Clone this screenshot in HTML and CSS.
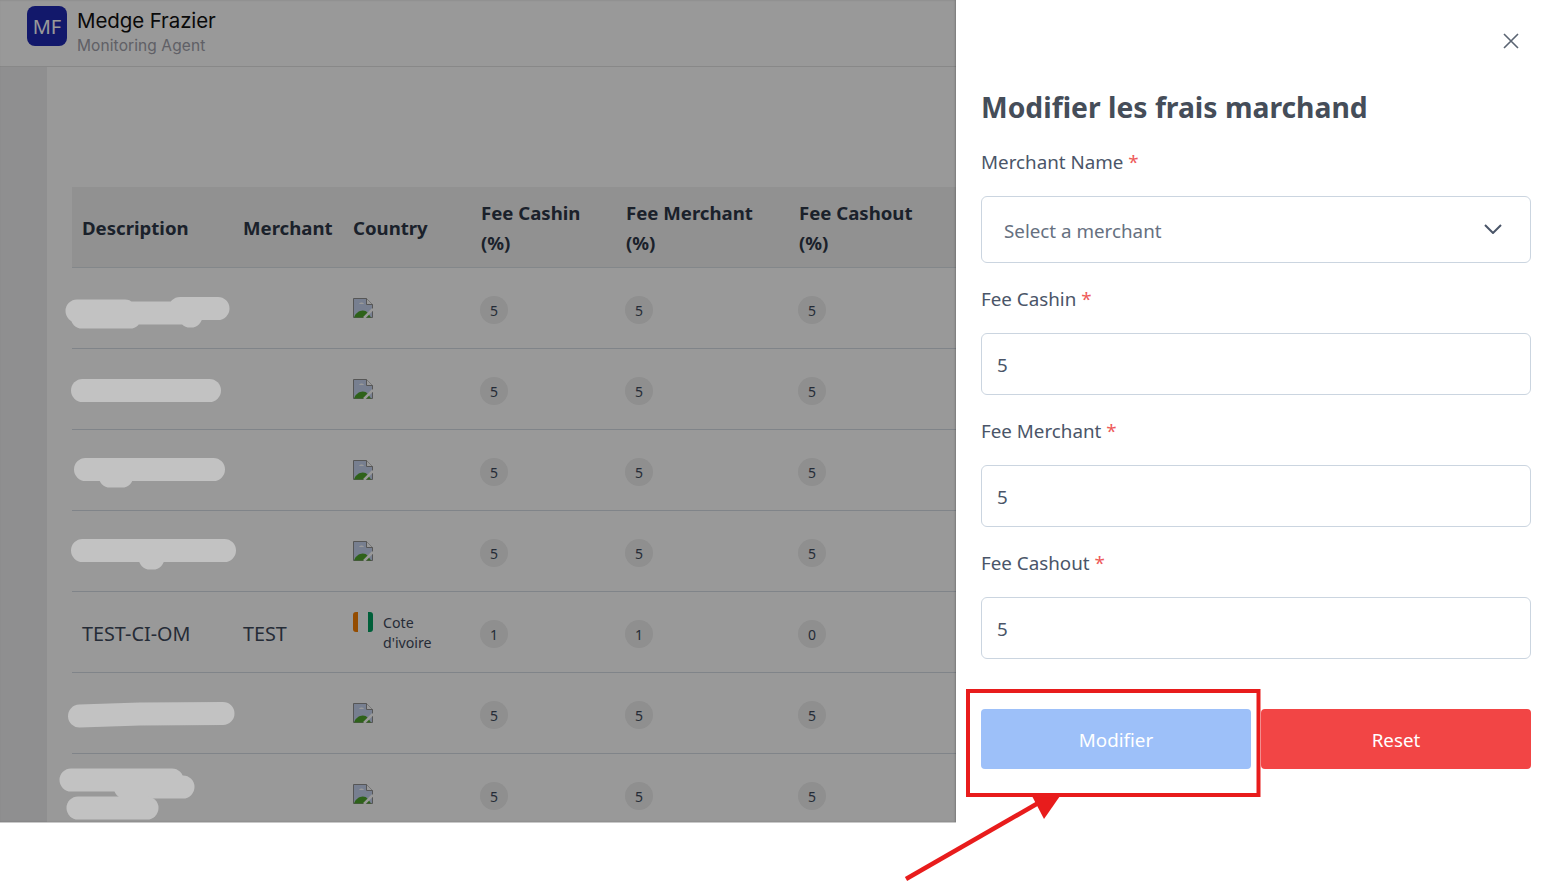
FILE: index.html
```html
<!DOCTYPE html>
<html lang="fr">
<head>
<meta charset="utf-8">
<title>Modifier les frais marchand</title>
<link rel="stylesheet" href="styles.css">
</head>
<body>
<div class="page">
  <section class="app">
    <header class="topbar">
      <div class="avatar">MF</div>
      <div class="user">
        <div class="user-name">Medge Frazier</div>
        <div class="user-role">Monitoring Agent</div>
      </div>
    </header>
    <div class="body-row">
      <aside class="sidebar"></aside>
      <main class="content">
        <table class="fees">
          <colgroup>
            <col class="c1"><col class="c2"><col class="c3"><col class="c4"><col class="c5"><col class="c6"><col>
          </colgroup>
          <thead>
            <tr><th>Description</th><th>Merchant</th><th>Country</th><th>Fee Cashin (%)</th><th>Fee Merchant (%)</th><th>Fee Cashout (%)</th><th></th></tr>
          </thead>
          <tbody>
            <tr><td></td><td></td><td><svg class="broken" viewBox="0 0 20 20"><use href="#broken-img"/></svg></td><td><span class="badge">5</span></td><td><span class="badge">5</span></td><td><span class="badge">5</span></td><td></td></tr>
            <tr><td></td><td></td><td><svg class="broken" viewBox="0 0 20 20"><use href="#broken-img"/></svg></td><td><span class="badge">5</span></td><td><span class="badge">5</span></td><td><span class="badge">5</span></td><td></td></tr>
            <tr><td></td><td></td><td><svg class="broken" viewBox="0 0 20 20"><use href="#broken-img"/></svg></td><td><span class="badge">5</span></td><td><span class="badge">5</span></td><td><span class="badge">5</span></td><td></td></tr>
            <tr><td></td><td></td><td><svg class="broken" viewBox="0 0 20 20"><use href="#broken-img"/></svg></td><td><span class="badge">5</span></td><td><span class="badge">5</span></td><td><span class="badge">5</span></td><td></td></tr>
            <tr><td>TEST-CI-OM</td><td>TEST</td><td><div class="country"><span class="flag"></span><span class="country-name">Cote d'ivoire</span></div></td><td><span class="badge">1</span></td><td><span class="badge">1</span></td><td><span class="badge">0</span></td><td></td></tr>
            <tr><td></td><td></td><td><svg class="broken" viewBox="0 0 20 20"><use href="#broken-img"/></svg></td><td><span class="badge">5</span></td><td><span class="badge">5</span></td><td><span class="badge">5</span></td><td></td></tr>
            <tr><td></td><td></td><td><svg class="broken" viewBox="0 0 20 20"><use href="#broken-img"/></svg></td><td><span class="badge">5</span></td><td><span class="badge">5</span></td><td><span class="badge">5</span></td><td></td></tr>
          </tbody>
        </table>
      </main>
    </div>
    <div class="dim"></div>
    <svg class="redactions" viewBox="0 0 956 822" aria-hidden="true">
      <g fill="none" stroke="#c2c2c2" stroke-width="23" stroke-linecap="round" stroke-linejoin="round">
        <path d="M77 311H125M82 317H130M130 313H190M180 308.500H218M190 316h1"/>
        <path d="M82.500 390.500H209.500"/>
        <path d="M85.500 469.500H213.500M110 476H122"/>
        <path d="M82.500 550.500H224.500M150 558H153"/>
        <path d="M79.500 716L140 714L223 713.500"/>
        <path d="M71 780H172M125 787H183"/>
        <path d="M78 808H147"/>
      </g>
    </svg>
  </section>

  <aside class="panel">
    <div class="close-row">
      <svg class="close" viewBox="0 0 16 16"><path d="M1 1L15 15M15 1L1 15"/></svg>
    </div>
    <h1 class="panel-title">Modifier les frais marchand</h1>
    <form class="form">
      <div class="field">
        <label class="label">Merchant Name <span class="req">*</span></label>
        <div class="select">
          <span class="select-text">Select a merchant</span>
          <svg class="chevron" viewBox="0 0 18 10"><path d="M1 1L9 9L17 1"/></svg>
        </div>
      </div>
      <div class="field">
        <label class="label">Fee Cashin <span class="req">*</span></label>
        <div class="input">5</div>
      </div>
      <div class="field">
        <label class="label">Fee Merchant <span class="req">*</span></label>
        <div class="input">5</div>
      </div>
      <div class="field">
        <label class="label">Fee Cashout <span class="req">*</span></label>
        <div class="input">5</div>
      </div>
      <div class="actions">
        <button type="button" class="btn btn-primary">Modifier</button>
        <button type="button" class="btn btn-danger">Reset</button>
      </div>
    </form>
  </aside>

  <svg class="annotation" viewBox="0 0 1555 881" aria-hidden="true">
    <rect x="968" y="691" width="290.500" height="104" fill="none" stroke="#e81c1c" stroke-width="4"/>
    <path d="M906 879L1040 802" fill="none" stroke="#e81c1c" stroke-width="4.500"/>
    <path d="M1032 796H1060L1044 819Z" fill="#e81c1c"/>
  </svg>
</div>

<svg class="defs" aria-hidden="true">
  <symbol id="broken-img" viewBox="0 0 20 20">
    <path d="M0.500 0.500H13.500L19.500 6.500V19.500H0.500Z" fill="#c6d4f0" stroke="#8f8f8f"/>
    <path d="M13.500 0.500V6.500H19.500" fill="#fff" stroke="#8f8f8f"/>
    <path d="M1 19.500C3 13 11 10 15 15L18 19.500Z" fill="#4ea32c"/>
    <path d="M6 6C7 4 10 4 11 6Z" fill="#fff"/>
    <path d="M11 20L20 11" stroke="#fff" stroke-width="2.500"/>
  </symbol>
</svg>
</body>
</html>
```
FILE: styles.css
```css
* { box-sizing: border-box; }
html, body { margin: 0; height: 100%; }
body {
  font-family: "Noto Sans", "Liberation Sans", sans-serif;
  color: #2d3748;
  background: #fff;
  overflow: hidden;
}
.page { position: relative; display: flex; width: 1555px; height: 881px; align-items: flex-start; }

.app {
  position: relative;
  width: 956px;
  height: 823px;
  flex: none;
  overflow: hidden;
  background: #fff;
  border-bottom: 1px solid #c9c9c9;
  display: flex;
  flex-direction: column;
}
.dim { position: absolute; inset: 0; background: rgba(0, 0, 0, 0.4); box-shadow: inset -1px 0 2px rgba(0, 0, 0, 0.2); }
.redactions { position: absolute; left: 0; top: 0; width: 956px; height: 822px; }

.topbar {
  height: 67px;
  flex: none;
  display: flex;
  align-items: flex-start;
  gap: 10px;
  padding: 6px 0 0 27px;
  border-bottom: 1px solid #e3e3e3;
  background: #fff;
}
.avatar {
  width: 40px;
  height: 40px;
  border-radius: 8px;
  background: #1e28b2;
  color: #fff;
  display: flex;
  align-items: center;
  justify-content: center;
  font-size: 20px;
}
.user { margin-top: 2px; }
.user-name { font-family: Inter, "Noto Sans", sans-serif; font-size: 20.500px; line-height: 26px; color: #111; letter-spacing: -0.1px; }
.user-role { font-family: Inter, "Noto Sans", sans-serif; font-size: 15.500px; line-height: 20px; margin-top: 2px; color: #a0a0aa; letter-spacing: 0.1px; }

.body-row { flex: 1; display: flex; min-height: 0; }
.sidebar { width: 47px; flex: none; background: #eeeef0; }
.content { flex: 1; min-width: 0; padding: 120px 0 0 25px; }

.fees { width: 884px; table-layout: fixed; border-collapse: collapse; font-size: 19.800px; }
.c1 { width: 161px; }
.c2 { width: 110px; }
.c3 { width: 128px; }
.c4 { width: 145px; }
.c5 { width: 173px; }
.c6 { width: 167px; }
.fees th {
  height: 80px;
  padding: 2px 10px 0;
  background: #f2f2f2;
  text-align: left;
  font-size: 18.600px;
  line-height: 30px;
  font-weight: 700;
  color: #2d3748;
  border-bottom: 1px solid #dbe1e7;
}
.fees td {
  height: 81px;
  padding: 3px 10px 0;
  vertical-align: middle;
  color: #3f4a5c;
  border-bottom: 1px solid #d5dde5;
}
.broken { display: block; width: 20px; height: 20px; margin-top: -3px; }
.country { display: flex; gap: 10px; align-items: flex-start; margin-top: -2px; }
.flag {
  width: 20px;
  height: 20px;
  flex: none;
  border-radius: 3px;
  background: linear-gradient(90deg, #f77f00 0 5px, #fff 5px 15px, #009e60 15px);
}
.country-name { width: 60px; font-size: 14.200px; line-height: 20px; margin-top: 1px; }
.badge {
  display: flex;
  width: 28px;
  height: 28px;
  border-radius: 50%;
  margin: 2px 0 0 -1px;
  background: #eeeeee;
  color: #3f4a5c;
  font-size: 14px;
  align-items: center;
  justify-content: center;
}

.panel { flex: 1; height: 881px; padding: 0 24px 0 25px; background: #fff; color: #4a5568; }
.close-row { height: 74px; display: flex; justify-content: flex-end; padding: 33px 12px 0 0; }
.close { width: 16px; height: 16px; fill: none; stroke: #5a6472; stroke-width: 1.600; }
.panel-title { margin: 0; font-size: 28.300px; line-height: 66px; font-weight: 700; color: #454d59; }
.form { display: flex; flex-direction: column; }
.field { display: flex; flex-direction: column; }
.label { font-size: 18.800px; line-height: 26px; height: 26px; margin: 9px 0 21px; display: block; }
.field + .field .label { margin-top: 23px; margin-bottom: 21px; }
.req { color: #ee5a5a; }
.select {
  height: 67px;
  border: 1px solid #cbd5e0;
  border-radius: 6px;
  padding: 0 28px 0 22px;
  display: flex;
  align-items: center;
  justify-content: space-between;
  font-size: 18.800px;
  color: #667080;
}
.select-text { margin-top: 2px; }
.chevron { width: 18px; height: 10px; fill: none; stroke: #4a5568; stroke-width: 2; margin-top: -2px; }
.input {
  height: 62px;
  border: 1px solid #cbd5e0;
  border-radius: 6px;
  padding: 2px 15px 0;
  display: flex;
  align-items: center;
  font-size: 18.800px;
  color: #4a5568;
}
.actions { display: flex; gap: 10px; margin-top: 50px; }
.btn {
  flex: 1;
  height: 60px;
  border: 0;
  border-radius: 4px;
  padding: 2px 0 0;
  color: #fff;
  font-family: inherit;
  font-size: 18.800px;
}
.btn-primary { background: #9dc0f9; }
.btn-danger { background: #f24545; }

.annotation { position: absolute; left: 0; top: 0; width: 1555px; height: 881px; pointer-events: none; z-index: 2; }
.defs { position: absolute; width: 0; height: 0; }
```
